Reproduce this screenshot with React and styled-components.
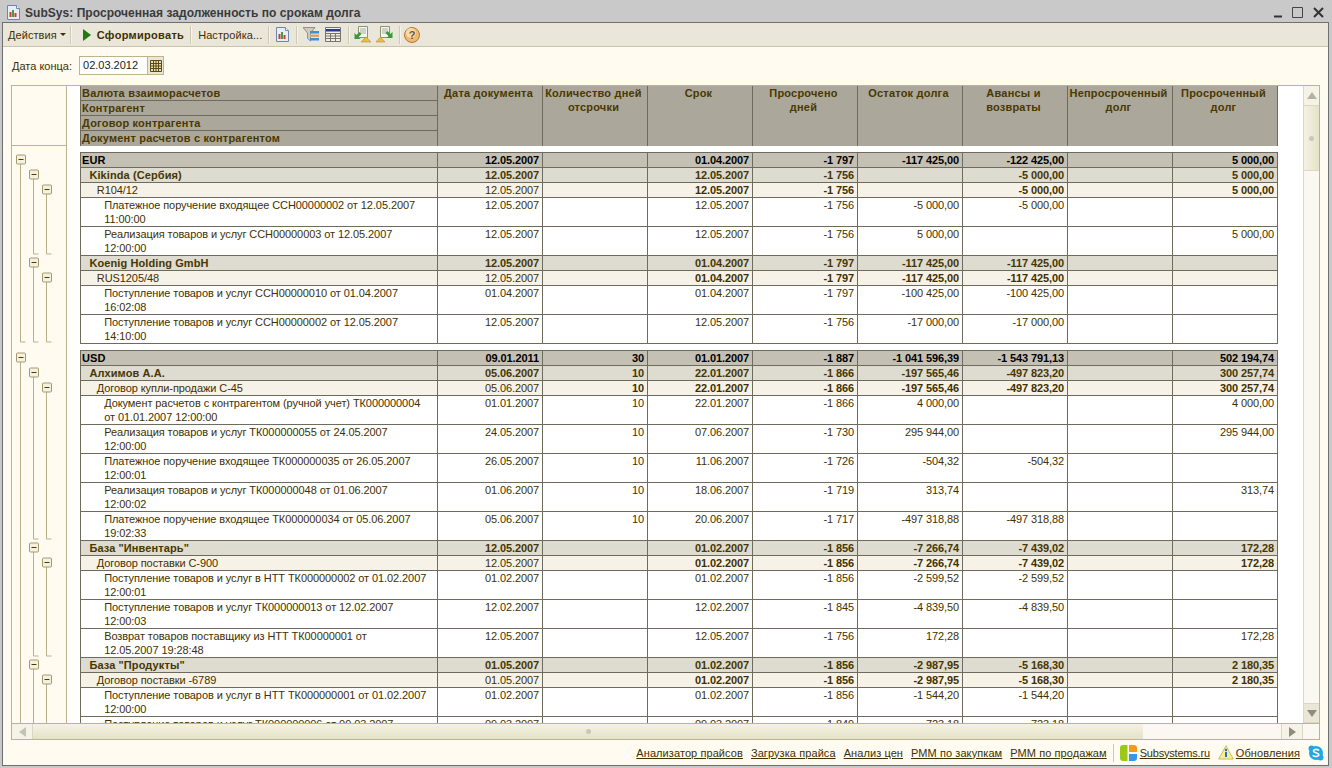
import React from "react";
import styled, { createGlobalStyle } from "styled-components";

const GlobalStyle = createGlobalStyle`
  html, body {
    margin: 0;
    padding: 0;
    width: 1332px;
    height: 768px;
    overflow: hidden;
    background: #c9c9c9;
    font-family: "Liberation Sans", Arial, sans-serif;
    font-size: 11px;
    color: #3f3000;
  }
`;

const ROW_H = 15;
const LINE_H = 14;

// level: 0 currency, 1 counterparty, 2 contract, 3 document
// cells: date, qty, term, overdue, rest, advance, notOverdue, overdueDebt; "*" prefix = bold on contract rows
const rows = [
  { level: 0, name: "EUR", cells: ["12.05.2007", "", "01.04.2007", "-1 797", "-117 425,00", "-122 425,00", "", "5 000,00"] },
  { level: 1, name: "Kikinda (Сербия)", cells: ["12.05.2007", "", "12.05.2007", "-1 756", "", "-5 000,00", "", "5 000,00"] },
  { level: 2, name: "R104/12", cells: ["12.05.2007", "", "*12.05.2007", "*-1 756", "", "*-5 000,00", "", "*5 000,00"] },
  { level: 3, name: "Платежное поручение входящее ССН00000002 от 12.05.2007\n11:00:00", cells: ["12.05.2007", "", "12.05.2007", "-1 756", "-5 000,00", "-5 000,00", "", ""] },
  { level: 3, name: "Реализация товаров и услуг ССН00000003 от 12.05.2007\n12:00:00", cells: ["12.05.2007", "", "12.05.2007", "-1 756", "5 000,00", "", "", "5 000,00"] },
  { level: 1, name: "Koenig Holding GmbH", cells: ["12.05.2007", "", "01.04.2007", "-1 797", "-117 425,00", "-117 425,00", "", ""] },
  { level: 2, name: "RUS1205/48", cells: ["12.05.2007", "", "*01.04.2007", "*-1 797", "*-117 425,00", "*-117 425,00", "", ""] },
  { level: 3, name: "Поступление товаров и услуг ССН00000010 от 01.04.2007\n16:02:08", cells: ["01.04.2007", "", "01.04.2007", "-1 797", "-100 425,00", "-100 425,00", "", ""] },
  { level: 3, name: "Поступление товаров и услуг ССН00000002 от 12.05.2007\n14:10:00", cells: ["12.05.2007", "", "12.05.2007", "-1 756", "-17 000,00", "-17 000,00", "", ""] },
  { level: 0, name: "USD", cells: ["09.01.2011", "30", "01.01.2007", "-1 887", "-1 041 596,39", "-1 543 791,13", "", "502 194,74"] },
  { level: 1, name: "Алхимов А.А.", cells: ["05.06.2007", "10", "22.01.2007", "-1 866", "-197 565,46", "-497 823,20", "", "300 257,74"] },
  { level: 2, name: "Договор купли-продажи С-45", cells: ["05.06.2007", "*10", "*22.01.2007", "*-1 866", "*-197 565,46", "*-497 823,20", "", "*300 257,74"] },
  { level: 3, name: "Документ расчетов с контрагентом (ручной учет) ТК000000004\nот 01.01.2007 12:00:00", cells: ["01.01.2007", "10", "22.01.2007", "-1 866", "4 000,00", "", "", "4 000,00"] },
  { level: 3, name: "Реализация товаров и услуг ТК000000055 от 24.05.2007\n12:00:00", cells: ["24.05.2007", "10", "07.06.2007", "-1 730", "295 944,00", "", "", "295 944,00"] },
  { level: 3, name: "Платежное поручение входящее ТК000000035 от 26.05.2007\n12:00:01", cells: ["26.05.2007", "10", "11.06.2007", "-1 726", "-504,32", "-504,32", "", ""] },
  { level: 3, name: "Реализация товаров и услуг ТК000000048 от 01.06.2007\n12:00:02", cells: ["01.06.2007", "10", "18.06.2007", "-1 719", "313,74", "", "", "313,74"] },
  { level: 3, name: "Платежное поручение входящее ТК000000034 от 05.06.2007\n19:02:33", cells: ["05.06.2007", "10", "20.06.2007", "-1 717", "-497 318,88", "-497 318,88", "", ""] },
  { level: 1, name: "База \"Инвентарь\"", cells: ["12.05.2007", "", "01.02.2007", "-1 856", "-7 266,74", "-7 439,02", "", "172,28"] },
  { level: 2, name: "Договор поставки С-900", cells: ["12.05.2007", "", "*01.02.2007", "*-1 856", "*-7 266,74", "*-7 439,02", "", "*172,28"] },
  { level: 3, name: "Поступление товаров и услуг в НТТ ТК000000002 от 01.02.2007\n12:00:01", cells: ["01.02.2007", "", "01.02.2007", "-1 856", "-2 599,52", "-2 599,52", "", ""] },
  { level: 3, name: "Поступление товаров и услуг ТК000000013 от 12.02.2007\n12:00:03", cells: ["12.02.2007", "", "12.02.2007", "-1 845", "-4 839,50", "-4 839,50", "", ""] },
  { level: 3, name: "Возврат товаров поставщику из НТТ ТК00000001 от\n12.05.2007 19:28:48", cells: ["12.05.2007", "", "12.05.2007", "-1 756", "172,28", "", "", "172,28"] },
  { level: 1, name: "База \"Продукты\"", cells: ["01.05.2007", "", "01.02.2007", "-1 856", "-2 987,95", "-5 168,30", "", "2 180,35"] },
  { level: 2, name: "Договор поставки -6789", cells: ["01.05.2007", "", "*01.02.2007", "*-1 856", "*-2 987,95", "*-5 168,30", "", "*2 180,35"] },
  { level: 3, name: "Поступление товаров и услуг в НТТ ТК000000001 от 01.02.2007\n12:00:00", cells: ["01.02.2007", "", "01.02.2007", "-1 856", "-1 544,20", "-1 544,20", "", ""] },
  { level: 3, name: "Поступление товаров и услуг ТК000000006 от 09.03.2007\n12:00:00", cells: ["09.03.2007", "", "09.03.2007", "-1 849", "-723,18", "-723,18", "", ""] },
];

const headers = [
  "Дата документа",
  "Количество дней\nотсрочки",
  "Срок",
  "Просрочено\nдней",
  "Остаток долга",
  "Авансы и\nвозвраты",
  "Непросроченный\nдолг",
  "Просроченный\nдолг",
];

const groupHeaders = [
  "Валюта взаиморасчетов",
  "Контрагент",
  "Договор контрагента",
  "Документ расчетов с контрагентом",
];

const links = ["Анализатор прайсов", "Загрузка прайса", "Анализ цен", "РММ по закупкам", "РММ по продажам"];

const rowBg = ["#c5c0b4", "#dedbd0", "#f7f2e8", "#ffffff"];
const rowColor = ["#000000", "#463700", "#3f3000", "#3f3000"];

const App = () => (
  <Page>
    <GlobalStyle />
    <TitleBar>
      <ReportIcon />
      <TitleText>SubSys: Просроченная задолженность по срокам долга</TitleText>
      <WindowButtons>
        <svg width="11" height="11" viewBox="0 0 11 11"><path d="M0 9.5h8" stroke="#333" strokeWidth="2" /></svg>
        <svg width="11" height="11" viewBox="0 0 11 11"><path d="M.5.5h10v10H.5z" fill="none" stroke="#444" /></svg>
        <CloseGlyph width="11" height="11" viewBox="0 0 11 11"><path d="M1 1l9 9M10 1l-9 9" stroke="#333" strokeWidth="2" /></CloseGlyph>
      </WindowButtons>
    </TitleBar>
    <Frame>
      <Toolbar>
        <ToolText $pl={2} $pr={1}>Действия<Caret /></ToolText>
        <Sep />
        <ToolText $bold $pl={9} $pr={3}>
          <svg width="8" height="12" viewBox="0 0 8 12"><path d="M0 0l8 6-8 6z" fill="#1f7a10" /></svg>
          Сформировать
        </ToolText>
        <Sep />
        <ToolText $pl={4} $pr={3}>Настройка...</ToolText>
        <Sep />
        <ToolIcon $w={21}><ReportIcon /></ToolIcon>
        <Sep />
        <ToolIcon $w={21}><FilterIcon /></ToolIcon>
        <ToolIcon $w={24}><TableIcon /></ToolIcon>
        <Sep />
        <ToolIcon $w={20}><ExportIcon /></ToolIcon>
        <ToolIcon $w={24}><ExportIcon $flip /></ToolIcon>
        <Sep />
        <ToolIcon $w={18}><HelpIcon /></ToolIcon>
      </Toolbar>
      <DateRow>
        <DateLabel>Дата конца:</DateLabel>
        <DateField>
          <DateValue>02.03.2012</DateValue>
          <CalendarButton>
            <svg width="12" height="12" viewBox="0 0 12 12">
              <path d="M.5.5h11v11H.5z" fill="#e8dfb8" stroke="#5a4a10" />
              <path d="M0 3.5h12M0 6h12M0 8.5h12M3.5 0v12M6 0v12M8.5 0v12" stroke="#5a4a10" />
            </svg>
          </CalendarButton>
        </DateField>
      </DateRow>
      <Panel>
        <PanelMain>
          <ScrollArea>
            <HeaderRow>
              <HeaderTree />
              <Gutter />
              <GroupHeader>
                {groupHeaders.map(h => <GroupHeaderLine key={h}>{h}</GroupHeaderLine>)}
              </GroupHeader>
              {headers.map(h => <HeaderCell key={h}>{h}</HeaderCell>)}
              <HeaderFill />
            </HeaderRow>
            <Body>
              <TreeColumn><TreeLines /></TreeColumn>
              <Gutter />
              <Table>
                {rows.map((r, i) => (
                  <React.Fragment key={i}>
                    {r.level === 0 && i > 0 && <GroupGap />}
                    <Row $level={r.level} $tall={r.name.includes("\n")}>
                      <NameCell $level={r.level}>{r.name}</NameCell>
                      {r.cells.map((c, j) => (
                        <Cell key={j} $bold={c.startsWith("*")}>{c.replace("*", "")}</Cell>
                      ))}
                    </Row>
                  </React.Fragment>
                ))}
              </Table>
            </Body>
          </ScrollArea>
          <VScroll>
            <ScrollBtn $h={20}><Arrow $dir="up" /></ScrollBtn>
            <VThumb><Grip /></VThumb>
            <VTrack />
            <ScrollBtn $h={20} $bottom><Arrow $dir="down" /></ScrollBtn>
          </VScroll>
        </PanelMain>
        <HScroll>
          <HButton><Arrow $dir="left" /></HButton>
          <HThumb><Grip /></HThumb>
          <HTrack />
          <HButton $w={21}><Arrow $dir="right" /></HButton>
          <Corner />
        </HScroll>
      </Panel>
      <Footer>
        {links.map(l => <FooterLink key={l}>{l}</FooterLink>)}
        <FooterSep />
        <LogoSlot $mr={-5}><SubsystemsLogo /></LogoSlot>
        <FooterLink $tight>Subsystems.ru</FooterLink>
        <LogoSlot $mr={-6}><InfoIcon /></LogoSlot>
        <FooterLink>Обновления</FooterLink>
        <LogoSlot><SkypeIcon /></LogoSlot>
      </Footer>
    </Frame>
  </Page>
);

export default App;

// tree drawing, built from the rows so the branches follow the data
const TreeLines = () => {
  let y = 0;
  const marks = rows.map((r, i) => {
    if (r.level === 0 && i > 0) y += 7;
    const top = y;
    y += r.name.includes("\n") ? ROW_H + LINE_H : ROW_H;
    return { level: r.level, top, bottom: y };
  });
  const items = [];
  marks.forEach((m, i) => {
    if (m.level === 3) return;
    let last = i;
    while (last + 1 < marks.length && marks[last + 1].level > m.level) last++;
    const x = 8.5 + m.level * 13;
    const cy = m.top + 7;
    items.push(
      <g key={i}>
        <path
          d={`M${x} ${cy + 4}V${marks[last].bottom - 1}h5`}
          fill="none"
          stroke="#b9b08a"
        />
        <rect x={x - 4} y={cy - 4} width="9" height="9" rx="1" fill="#f6f1df" stroke="#a39a70" />
        <path d={`M${x - 2} ${cy + 0.5}h5`} stroke="#4a3a10" />
      </g>
    );
  });
  return (
    <svg width="54" height={y} viewBox={`0 0 54 ${y}`}>
      {items}
    </svg>
  );
};

const ReportIcon = () => (
  <svg width="13" height="15" viewBox="0 0 13 15">
    <path d="M.5.5h9l3 3v11H.5z" fill="#e4edf8" stroke="#6f86a8" />
    <path d="M9.500.5v3h3" fill="#fff" stroke="#6f86a8" />
    <path d="M2.500 12V7H4.500v5z" fill="#d63a2c" />
    <path d="M5 12V5h2v7z" fill="#4a9a3a" />
    <path d="M7.500 12V8h2v4z" fill="#d63a2c" />
  </svg>
);

const FilterIcon = () => (
  <svg width="16" height="16" viewBox="0 0 16 16">
    <path d="M0 .5h12L7.500 6v8L4.500 11.500V6z" fill="#cfcabb" stroke="#77736a" strokeWidth=".7" />
    <path d="M7 4h9v2.500H7z" fill="#3e8ed8" />
    <path d="M7 7.500h9V10H7z" fill="#d8a868" />
    <path d="M7 11h9v2.500H7z" fill="#3e8ed8" />
  </svg>
);

const TableIcon = () => (
  <svg width="16" height="15" viewBox="0 0 16 15">
    <path d="M.5.5h15v14H.5z" fill="#f2efe6" stroke="#77736a" />
    <path d="M1 2h14v2.500H1z" fill="#2b3a8c" />
    <path d="M1 6.500h14M1 9h14M1 11.500h14M5.500 6v8M10.500 6v8" stroke="#77736a" />
  </svg>
);

const ExportIcon = ({ $flip }) => (
  <svg width="17" height="17" viewBox="0 0 17 17">
    <path d="M4.500.5h9v11h-9z" fill="#f6f6f0" stroke="#8a937a" />
    <path d="M6 3h6M6 5h6M6 7h6" stroke="#a8b098" />
    <path d={$flip ? "M0 16l4.500-5L9 16z" : "M7 16l5-5 5 5z"} fill="#e8c040" stroke="#b89020" strokeWidth=".6" />
    <path
      d={$flip ? "M16.500 6v6h-6l2-2-3-3 2-2 3 3z" : "M.5 7v6h6l-2-2 3-3-2-2-3 3z"}
      fill="#3a9a3a"
    />
  </svg>
);

const HelpIcon = () => (
  <svg width="16" height="16" viewBox="0 0 16 16">
    <circle cx="8" cy="8" r="7.500" fill="#f2b872" stroke="#b07a3a" />
    <circle cx="7" cy="6" r="5" fill="#fbd9a8" />
    <text x="8" y="12" textAnchor="middle" fontSize="11" fontWeight="700" fill="#6a5a40" fontFamily="Liberation Sans">?</text>
  </svg>
);

const SubsystemsLogo = () => (
  <svg width="17" height="16" viewBox="0 0 17 16">
    <path d="M3 0h4.500v16H3a3 3 0 0 1-3-3V3a3 3 0 0 1 3-3z" fill="#9cc81e" />
    <path d="M9 0h5a3 3 0 0 1 3 3v4H9z" fill="#f79a1c" />
    <path d="M9 9h8v4a3 3 0 0 1-3 3H9z" fill="#2e9af0" />
  </svg>
);

const InfoIcon = () => (
  <svg width="16" height="15" viewBox="0 0 16 15">
    <path d="M8 .8L15.300 14H.7z" fill="#f6ef9a" stroke="#c9bd60" />
    <circle cx="8" cy="5" r="1.200" fill="#2e70c0" />
    <path d="M7 7h2v5H7z" fill="#2e70c0" />
  </svg>
);

const SkypeIcon = () => (
  <svg width="16" height="16" viewBox="0 0 16 16">
    <circle cx="8" cy="8" r="7" fill="#22a6e8" />
    <circle cx="3.500" cy="3.500" r="3" fill="#22a6e8" />
    <circle cx="12.500" cy="12.500" r="3" fill="#22a6e8" />
    <path d="M11 5.500C10 4 6 3.800 5.500 5.800 5 8 11 7.500 10.800 10 10.500 12 6 12 4.800 10.300" fill="none" stroke="#fff" strokeWidth="1.600" />
  </svg>
);

const Arrow = styled.span`
  width: 0;
  height: 0;
  border-style: solid;
  border-color: transparent;
  ${p => p.$dir === "up" && "border-width: 0 5px 7px; border-bottom-color: #b4b1a4;"}
  ${p => p.$dir === "down" && "border-width: 7px 5px 0; border-top-color: #8e8b80;"}
  ${p => p.$dir === "left" && "border-width: 5px 7px 5px 0; border-right-color: #c4c1b6;"}
  ${p => p.$dir === "right" && "border-width: 5px 0 5px 7px; border-left-color: #8e8b80;"}
`;

const Page = styled.div`
  width: 1332px;
  height: 768px;
  display: flex;
  flex-direction: column;
  box-sizing: border-box;
  padding: 2px 3px 2px 2px;
  overflow: hidden;
`;

const TitleBar = styled.div`
  height: 20px;
  flex: none;
  box-sizing: border-box;
  display: flex;
  align-items: center;
  padding: 1px 5px 0 5px;
  gap: 5px;
  background: #c9c9c9;
`;

const TitleText = styled.div`
  font-size: 12px;
  font-weight: 700;
  color: #3a3a3a;
  letter-spacing: 0.04px;
  flex: 1;
`;

const WindowButtons = styled.div`
  display: flex;
  gap: 7px;
  align-items: center;
`;

const CloseGlyph = styled.svg`
  margin-left: 3px;
`;

const Frame = styled.div`
  flex: 1;
  min-height: 0;
  display: flex;
  flex-direction: column;
  border: 1px solid #6f6f6f;
  background: #fffbf0;
`;

const Toolbar = styled.div`
  height: 24px;
  flex: none;
  box-sizing: border-box;
  display: flex;
  align-items: center;
  padding-left: 3px;
  background: #ebe6da;
  border-bottom: 1px solid #c9c4a8;
`;

const ToolText = styled.div`
  display: flex;
  align-items: center;
  gap: 6px;
  padding: 0 ${p => p.$pr}px 0 ${p => p.$pl}px;
  font-size: 11px;
  font-weight: ${p => (p.$bold ? 700 : 400)};
  color: #3f3000;
  letter-spacing: ${p => (p.$bold ? 0.3 : 0.07)}px;
  white-space: nowrap;
`;

const Caret = styled.span`
  width: 0;
  height: 0;
  margin-left: -3px;
  border-style: solid;
  border-width: 3px 3px 0;
  border-color: #3f3000 transparent transparent;
`;

const Sep = styled.span`
  width: 1px;
  height: 18px;
  margin: 0 3px;
  background: #cfcab8;
  box-shadow: 1px 0 0 #f6f3ea;
  flex: none;
`;

const ToolIcon = styled.div`
  width: ${p => p.$w}px;
  flex: none;
  display: flex;
  justify-content: center;
  align-items: center;
`;

const DateRow = styled.div`
  height: 38px;
  flex: none;
  box-sizing: border-box;
  display: flex;
  align-items: center;
  gap: 7px;
  padding: 0 0 1px 9px;
`;

const DateLabel = styled.label`
  letter-spacing: 0;
`;

const DateField = styled.div`
  display: flex;
  width: 85px;
  height: 19px;
  box-sizing: border-box;
  border: 1px solid #bdb48e;
  background: #fff;
`;

const DateValue = styled.div`
  flex: 1;
  line-height: 17px;
  padding-left: 3px;
  font-size: 11px;
  color: #222;
`;

const CalendarButton = styled.div`
  width: 15px;
  display: flex;
  align-items: center;
  justify-content: center;
  background: #ebe6da;
  border-left: 1px solid #bdb48e;
`;

const Panel = styled.div`
  width: 1309px;
  height: 655px;
  flex: none;
  margin-left: 8px;
  box-sizing: border-box;
  display: flex;
  flex-direction: column;
  border: 1px solid #bdb48e;
  background: #fffbf0;
`;

const PanelMain = styled.div`
  flex: 1;
  min-height: 0;
  display: flex;
`;

const ScrollArea = styled.div`
  flex: 1;
  min-width: 0;
  overflow: hidden;
  display: flex;
  flex-direction: column;
`;

const HeaderRow = styled.div`
  height: 60px;
  flex: none;
  box-sizing: border-box;
  display: grid;
  grid-template-columns: 55px 13px 358px repeat(8, 105px) 1fr;
  border-bottom: 1px solid #bdb48e;
`;

const HeaderTree = styled.div`
  border-right: 1px solid #bdb48e;
`;

const Gutter = styled.div`
  background: #fff;
  width: 13px;
  flex: none;
`;

const GroupHeader = styled.div`
  display: grid;
  grid-auto-rows: 15px;
  background: #aba89b;
  border-right: 1px solid #6e6a5c;
  border-left: 1px solid #6e6a5c;
`;

const GroupHeaderLine = styled.div`
  padding-left: 1px;
  font-weight: 700;
  line-height: 14px;
  letter-spacing: 0.2px;
  color: #4a3800;
  white-space: nowrap;
  border-bottom: 1px solid #6e6a5c;
  &:last-child {
    border-bottom: 0;
  }
`;

const HeaderCell = styled.div`
  background: #aba89b;
  color: #4a3800;
  font-weight: 700;
  line-height: 14px;
  letter-spacing: 0.2px;
  text-align: center;
  white-space: pre-line;
  padding-right: 3px;
  border-right: 1px solid #6e6a5c;
`;

const HeaderFill = styled.div`
  background: #fff;
`;

const Body = styled.div`
  flex: 1;
  min-height: 0;
  display: flex;
  background: #fff;
  overflow: hidden;
`;

const TreeColumn = styled.div`
  width: 55px;
  flex: none;
  box-sizing: border-box;
  padding-top: 6px;
  background: #fffbf0;
  border-right: 1px solid #bdb48e;
  svg {
    display: block;
  }
`;

const Table = styled.div`
  flex: none;
  width: 1198px;
  padding-top: 6px;
`;

const GroupGap = styled.div`
  height: 7px;
  box-sizing: border-box;
  background: #fff;
  border-top: 1px solid #6e6a5c;
`;

const Row = styled.div`
  display: grid;
  grid-template-columns: 357px repeat(8, 105px);
  height: ${p => (p.$tall ? ROW_H + LINE_H : ROW_H)}px;
  box-sizing: border-box;
  background: ${p => rowBg[p.$level]};
  color: ${p => rowColor[p.$level]};
  font-weight: ${p => (p.$level < 2 ? 700 : 400)};
  border-top: 1px solid #6e6a5c;
  border-left: 1px solid #6e6a5c;
  line-height: ${LINE_H}px;
`;

const NameCell = styled.div`
  padding-left: ${p => 1 + p.$level * 7.4}px;
  white-space: pre;
  letter-spacing: ${p => (p.$level < 2 ? 0.1 : -0.08)}px;
  border-right: 1px solid #6e6a5c;
`;

const Cell = styled.div`
  text-align: right;
  padding-right: 3px;
  white-space: nowrap;
  font-weight: ${p => (p.$bold ? 700 : "inherit")};
  letter-spacing: -0.1px;
  border-right: 1px solid #6e6a5c;
`;

const VScroll = styled.div`
  width: 16px;
  flex: none;
  display: flex;
  flex-direction: column;
  box-sizing: border-box;
  border-left: 1px solid #dcd7c0;
  background: #faf8f0;
`;

const ScrollBtn = styled.div`
  height: ${p => p.$h}px;
  flex: none;
  display: flex;
  align-items: center;
  justify-content: center;
  background: ${p => (p.$bottom ? "#ebe7d6" : "#f5f2e6")};
  border-bottom: 1px solid #dcd7c0;
  border-top: ${p => (p.$bottom ? "1px solid #dcd7c0" : "0")};
  box-sizing: border-box;
`;

const Grip = styled.span`
  width: 5px;
  height: 5px;
  border-radius: 50%;
  background: #c9c6ba;
`;

const VThumb = styled.div`
  height: 65px;
  flex: none;
  display: flex;
  align-items: center;
  justify-content: center;
  background: linear-gradient(to right, #f4f2e2, #e6e2c8);
  border-bottom: 1px solid #dcd7c0;
  box-sizing: border-box;
`;

const VTrack = styled.div`
  flex: 1;
`;

const HScroll = styled.div`
  height: 16px;
  flex: none;
  display: flex;
  box-sizing: border-box;
  border-top: 1px solid #bdb48e;
  background: #faf8f0;
`;

const HButton = styled.div`
  width: ${p => p.$w || 21}px;
  flex: none;
  display: flex;
  align-items: center;
  justify-content: center;
  background: #f5f2e6;
  box-sizing: border-box;
  border-right: 1px solid #dcd7c0;
`;

const HThumb = styled.div`
  width: 1110px;
  flex: none;
  display: flex;
  align-items: center;
  justify-content: center;
  background: linear-gradient(to bottom, #f4f2e2, #e6e2c8);
`;

const HTrack = styled.div`
  flex: 1;
  border-right: 1px solid #dcd7c0;
`;

const Corner = styled.div`
  width: 16px;
  flex: none;
`;

const Footer = styled.div`
  flex: 1;
  display: flex;
  align-items: center;
  justify-content: flex-end;
  padding-right: 4px;
  gap: 8px;
`;

const FooterLink = styled.a`
  color: #3f3000;
  text-decoration: underline;
  letter-spacing: ${p => (p.$tight ? -0.2 : 0.08)}px;
  white-space: nowrap;
`;

const FooterSep = styled.span`
  width: 1px;
  height: 18px;
  margin: 0 -2px;
  background: #cfcab8;
`;

const LogoSlot = styled.span`
  display: flex;
  margin-right: ${p => p.$mr || 0}px;
`;
